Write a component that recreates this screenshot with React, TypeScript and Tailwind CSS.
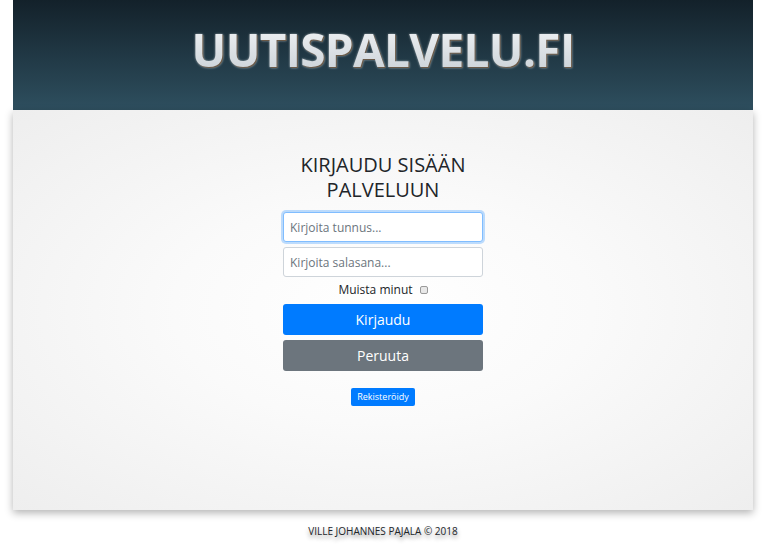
export default function App() {
  return (
    <div className="min-h-[549px] bg-white font-['Open_Sans',sans-serif] text-[#212529]">
      <header className="mx-[13px] flex h-[110px] items-start justify-center bg-[linear-gradient(to_bottom,#13212a,#2e4f5f)] pt-[22px]">
        <h1 className="bg-[linear-gradient(to_bottom,#f2f4f6,#c9d0d6)] bg-clip-text text-[46px] font-bold leading-[54px] tracking-[-0.7px] text-transparent [filter:drop-shadow(1px_1px_0_#6b5a48)_drop-shadow(0_0_1px_rgba(255,255,255,0.5))]">
          UUTISPALVELU.FI
        </h1>
      </header>

      <main className="mx-[13px] flex h-[400px] flex-col items-center bg-[radial-gradient(ellipse_at_center,#ffffff_0%,#fafafa_40%,#eeeeee_100%)] pt-[42px] shadow-[0_3px_8px_rgba(0,0,0,0.3)]">
        <h2 className="text-center text-[20px] font-medium leading-[25px] text-[#212529]">
          KIRJAUDU SISÄÄN
          <br />
          PALVELUUN
        </h2>
        <form className="mt-[10px] flex w-[200px] flex-col">
          <input
            placeholder="Kirjoita tunnus..."
            className="h-[30px] rounded-[3px] border border-[#80bdff] bg-white px-[6px] text-[12px] shadow-[0_0_0_2px_rgba(0,123,255,0.25)] outline-none placeholder:text-[#6c757d]"
          />
          <input
            placeholder="Kirjoita salasana..."
            className="mt-[5px] h-[30px] rounded-[3px] border border-[#ced4da] bg-white px-[6px] text-[12px] outline-none placeholder:text-[#6c757d]"
          />
          <label className="mt-[5px] flex h-[16px] items-center justify-center gap-[7px] text-[12px] leading-[16px] text-[#212529]">
            Muista minut
            <span className="h-[8px] w-[8px] rounded-[2px] border border-[#9a9a9a] bg-[#e8e8e8]" />
          </label>
          <button
            type="button"
            className="mt-[6px] h-[31px] rounded-[3px] bg-[#007bff] text-[14px] text-white"
          >
            Kirjaudu
          </button>
          <button
            type="button"
            className="mt-[5px] h-[31px] rounded-[3px] bg-[#6c757d] text-[14px] text-white"
          >
            Peruuta
          </button>
          <div className="mt-[17px] flex justify-center">
            <button
              type="button"
              className="h-[18px] rounded-[2px] bg-[#007bff] px-[6px] text-[9px] leading-[18px] text-white"
            >
              Rekisteröidy
            </button>
          </div>
        </form>
      </main>

      <footer className="pt-[14px] text-center text-[10px] font-medium text-[#212529] [text-shadow:0_3px_4px_rgba(0,0,0,0.45)]">
        VILLE JOHANNES PAJALA © 2018
      </footer>
    </div>
  );
}
